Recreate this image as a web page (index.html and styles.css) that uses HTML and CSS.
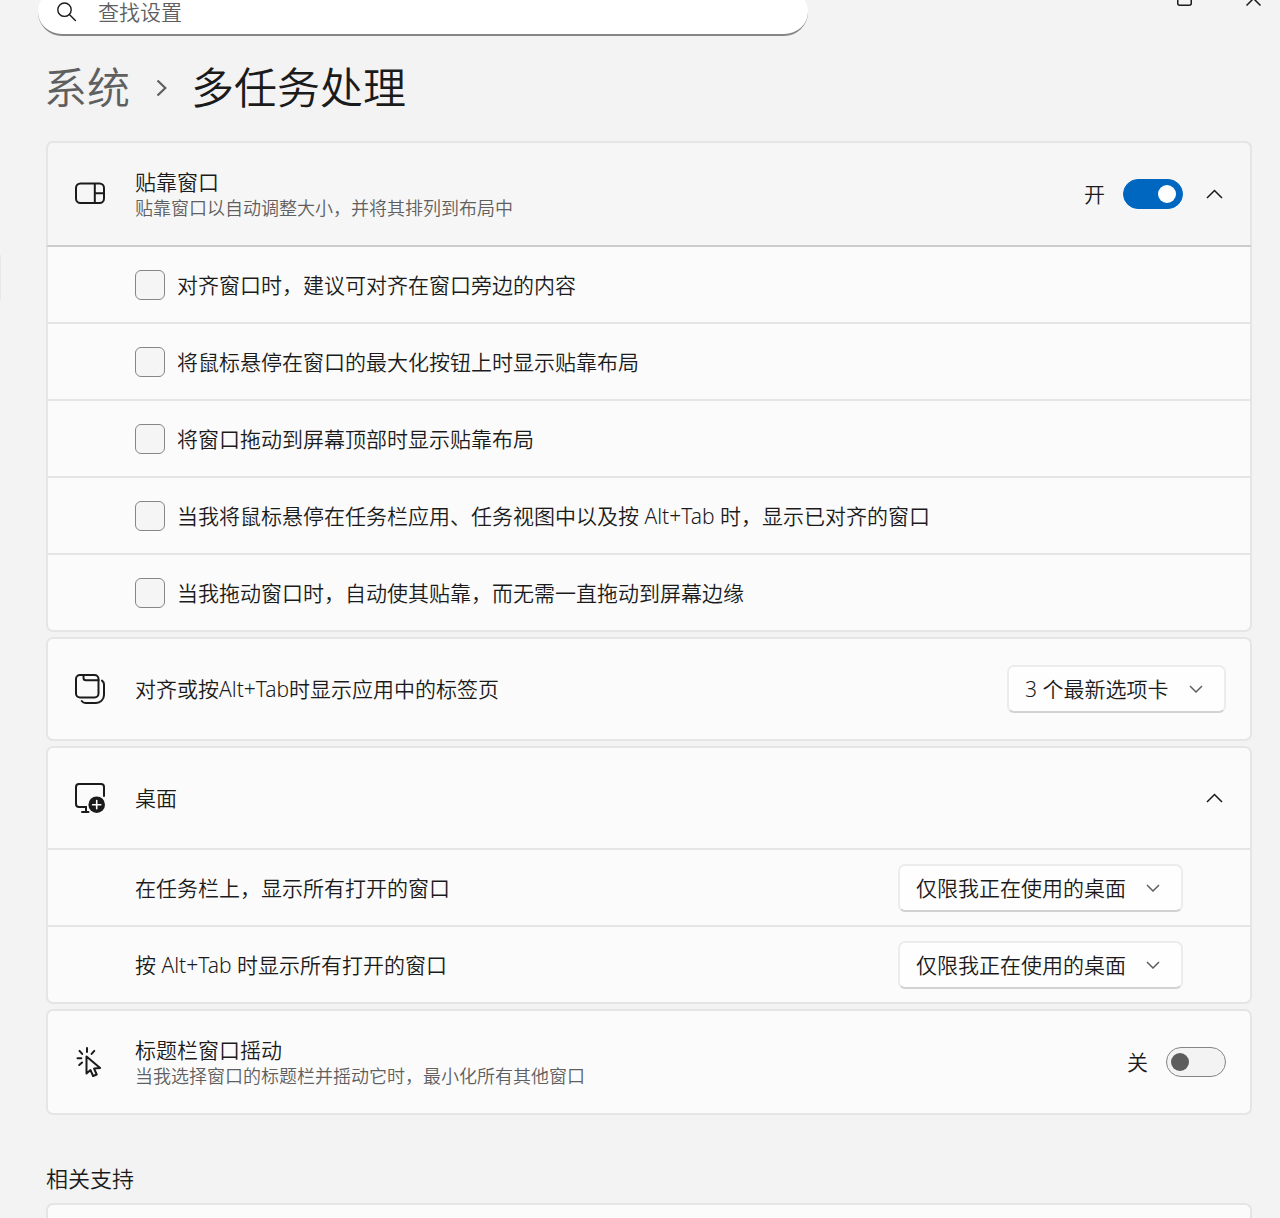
FILE: index.html
```html
<!DOCTYPE html>
<html lang="zh-CN">
<head>
<meta charset="utf-8">
<meta name="viewport" content="width=device-width, initial-scale=1">
<title>多任务处理</title>
<link rel="stylesheet" href="styles.css">
</head>
<body>
<div class="window">
  <span class="nav-edge"></span>
  <header class="topbar">
    <label class="search">
      <svg width="20" height="20" viewBox="0 0 20 20" fill="none" stroke="#1b1b1b" stroke-width="1.4" stroke-linecap="round" aria-hidden="true"><circle cx="7.5" cy="7.7" r="6.7"/><path d="M12.4 12.6 18.4 18.6"/></svg>
      <input type="text" placeholder="查找设置" aria-label="查找设置">
    </label>
    <div class="window-controls">
      <button type="button" aria-label="最大化"><svg width="15" height="15" viewBox="0 0 15 15" fill="none" stroke="#1b1b1b" stroke-width="1.5" aria-hidden="true"><rect x=".75" y=".75" width="13.5" height="13.5" rx="2"/></svg></button>
      <button type="button" aria-label="关闭"><svg width="15" height="15" viewBox="0 0 15 15" fill="none" stroke="#1b1b1b" stroke-width="1.5" aria-hidden="true"><path d="M.5.5l14 14M14.5.5l-14 14"/></svg></button>
    </div>
  </header>

  <main class="content">
    <nav class="breadcrumb">
      <a href="#system">系统</a>
      <svg width="12" height="18" viewBox="0 0 12 18" fill="none" stroke="#5f5f5f" stroke-width="2.2" aria-hidden="true"><path d="M1.5 1.5 9.3 9l-7.8 7.5"/></svg>
      <h1>多任务处理</h1>
    </nav>

    <div class="cards">
      <section class="card">
        <div class="head head-open">
          <svg class="icon" viewBox="0 0 30 30" fill="none" stroke="#1b1b1b" stroke-width="2" aria-hidden="true"><rect x="1" y="4.5" width="28" height="19.5" rx="4.5"/><path d="M19.8 4.5V24M19.8 14.3H29"/></svg>
          <div class="titles">
            <label class="title" for="snap">贴靠窗口</label>
            <p class="desc">贴靠窗口以自动调整大小，并将其排列到布局中</p>
          </div>
          <span class="state">开</span>
          <input class="switch" type="checkbox" role="switch" id="snap" checked>
          <button class="expander" type="button" aria-label="折叠"><svg width="18" height="10" viewBox="0 0 18 10" fill="none" stroke="#1b1b1b" stroke-width="1.5" aria-hidden="true"><path d="M1 9l7.5-7.5L16 9"/></svg></button>
        </div>
        <label class="row"><input class="check" type="checkbox"><span>对齐窗口时，建议可对齐在窗口旁边的内容</span></label>
        <label class="row"><input class="check" type="checkbox"><span>将鼠标悬停在窗口的最大化按钮上时显示贴靠布局</span></label>
        <label class="row"><input class="check" type="checkbox"><span>将窗口拖动到屏幕顶部时显示贴靠布局</span></label>
        <label class="row"><input class="check" type="checkbox"><span>当我将鼠标悬停在任务栏应用、任务视图中以及按 Alt+Tab 时，显示已对齐的窗口</span></label>
        <label class="row"><input class="check" type="checkbox"><span>当我拖动窗口时，自动使其贴靠，而无需一直拖动到屏幕边缘</span></label>
      </section>

      <section class="card">
        <div class="head">
          <svg class="icon" viewBox="0 0 30 30" fill="none" stroke="#1b1b1b" stroke-width="2" stroke-linecap="round" aria-hidden="true"><rect x="1" y="1" width="22.5" height="22.5" rx="4"/><path d="M8.5 1v2.8A2.5 2.5 0 0 0 11 6.3h12.5M27 6.6A5 5 0 0 1 29 10.5V21a8 8 0 0 1-8 8H10.5a5 5 0 0 1-3.8-2"/></svg>
          <div class="titles"><label class="title" for="tabs">对齐或按Alt+Tab时显示应用中的标签页</label></div>
          <span class="select">
            <select id="tabs"><option>3 个最新选项卡</option></select>
            <svg width="14" height="8" viewBox="0 0 14 8" fill="none" stroke="#5f5f5f" stroke-width="1.5" aria-hidden="true"><path d="M1 1l6 6 6-6"/></svg>
          </span>
        </div>
      </section>

      <section class="card">
        <div class="head">
          <svg class="icon" viewBox="0 0 30 30" fill="none" stroke="#1b1b1b" stroke-width="2" stroke-linecap="round" aria-hidden="true"><path d="M29 13V4a3 3 0 0 0-3-3H4a3 3 0 0 0-3 3v17a3 3 0 0 0 3 3h7v4.8M7 29h6.5"/><circle cx="21.7" cy="21.7" r="8.3" fill="#1b1b1b" stroke="none"/><path d="M21.7 17.6v8.2M17.6 21.7h8.2" stroke="#fff" stroke-width="1.6"/></svg>
          <div class="titles"><h2 class="title">桌面</h2></div>
          <button class="expander" type="button" aria-label="折叠"><svg width="18" height="10" viewBox="0 0 18 10" fill="none" stroke="#1b1b1b" stroke-width="1.5" aria-hidden="true"><path d="M1 9l7.5-7.5L16 9"/></svg></button>
        </div>
        <div class="row">
          <label class="grow" for="taskbar">在任务栏上，显示所有打开的窗口</label>
          <span class="select">
            <select id="taskbar"><option>仅限我正在使用的桌面</option></select>
            <svg width="14" height="8" viewBox="0 0 14 8" fill="none" stroke="#5f5f5f" stroke-width="1.5" aria-hidden="true"><path d="M1 1l6 6 6-6"/></svg>
          </span>
        </div>
        <div class="row">
          <label class="grow" for="alttab">按 Alt+Tab 时显示所有打开的窗口</label>
          <span class="select">
            <select id="alttab"><option>仅限我正在使用的桌面</option></select>
            <svg width="14" height="8" viewBox="0 0 14 8" fill="none" stroke="#5f5f5f" stroke-width="1.5" aria-hidden="true"><path d="M1 1l6 6 6-6"/></svg>
          </span>
        </div>
      </section>

      <section class="card">
        <div class="head">
          <svg class="icon" viewBox="0 0 30 30" fill="none" stroke="#1b1b1b" stroke-width="2" stroke-linejoin="round" stroke-linecap="round" aria-hidden="true"><path d="M11.5 9.5v17l4-3.4 2.6 5.9 3.6-1.5-2.6-5.9 6-.6z"/><path d="M12 1v4M4.5 3.9l2.7 3M19.3 3.9l-2.7 3M2.5 11.3h3.8M4.2 18l2.9-2.5"/></svg>
          <div class="titles">
            <label class="title" for="shake">标题栏窗口摇动</label>
            <p class="desc">当我选择窗口的标题栏并摇动它时，最小化所有其他窗口</p>
          </div>
          <span class="state">关</span>
          <input class="switch" type="checkbox" role="switch" id="shake">
        </div>
      </section>
    </div>

    <h2 class="support">相关支持</h2>
    <section class="card card-cut"></section>
  </main>
</div>
</body>
</html>
```
FILE: styles.css
```css
* { box-sizing: border-box; }

body {
  margin: 0;
  background: #f3f3f3;
  color: #1b1b1b;
  font: 350 21px/28px "Noto Sans", "Noto Sans CJK SC DemiLight", "Noto Sans CJK SC", sans-serif;
}

h1, h2, p { margin: 0; font-weight: inherit; }

input, select, button { font: inherit; color: inherit; margin: 0; }

button { padding: 0; border: 0; background: none; display: grid; place-items: center; }

svg { display: block; flex: none; }

.window {
  position: relative;
  display: flex;
  flex-direction: column;
  height: 100vh;
  overflow: hidden;
}

.nav-edge {
  position: absolute;
  left: 0;
  top: 255px;
  width: 1px;
  height: 45px;
  background: #e8e8e8;
}

/* The title bar is scrolled partly out of view */
.topbar {
  display: flex;
  flex: none;
  justify-content: space-between;
  align-items: flex-start;
  height: 48px;
  margin-top: -12px;
  padding: 0 19px 0 38px;
}

.search {
  display: flex;
  align-items: center;
  gap: 21px;
  flex: 0 1 770px;
  height: 48px;
  padding: 2px 19px 0;
  border-bottom: 2px solid #868686;
  border-radius: 24px;
  background: #fff;
}

.search input {
  flex: 1;
  min-width: 0;
  padding: 0;
  border: 0;
  outline: 0;
  background: none;
}

.search input::placeholder { color: #5f5f5f; opacity: 1; }

.window-controls { display: flex; gap: 54px; padding-top: 3px; }

.content {
  display: flex;
  flex-direction: column;
  flex: 1;
  padding: 0 28px 0 46px;
}

.breadcrumb {
  display: flex;
  align-items: center;
  height: 105px;
  margin-left: -2px;
  padding-bottom: 2px;
  font-size: 43px;
  line-height: 60px;
}

.breadcrumb a { color: #5f5f5f; text-decoration: none; }
.breadcrumb svg { margin: 0 23px 0 26px; }
.breadcrumb h1 { font-size: 43px; }

.cards { display: flex; flex-direction: column; gap: 5px; }

.card {
  border: 2px solid #e5e5e5;
  border-radius: 7px;
  background: #fbfbfb;
}

.head {
  display: flex;
  align-items: center;
  padding: 25px 24px 25px 27px;
}

/* Drawn over the card's side borders so that its divider spans the full width */
.head-open {
  margin: -2px -2px 0;
  border: 2px solid #e5e5e5;
  border-bottom-color: #cbcbcb;
  border-radius: 7px 7px 0 0;
  background: #f6f6f6;
}

.icon { width: 30px; height: 30px; margin-right: 30px; }

.titles { flex: 1; min-height: 50px; display: flex; flex-direction: column; justify-content: center; }

.title { font-size: 21px; line-height: 28px; }

.desc { color: #5f5f5f; font-size: 18px; line-height: 24px; }

.state { margin-right: 18px; }

.switch {
  appearance: none;
  display: flex;
  align-items: center;
  width: 60px;
  height: 30px;
  padding: 0 4px;
  border: 1px solid #868686;
  border-radius: 15px;
  background: #f3f3f3;
}

.switch::before {
  content: "";
  width: 18px;
  height: 18px;
  border-radius: 50%;
  background: #5d5d5d;
}

.switch:checked {
  justify-content: flex-end;
  padding: 0 6px;
  border-color: #0067c0;
  background: #0067c0;
}

.switch:checked::before { background: #fff; }

.expander { width: 22px; height: 30px; margin-left: 21px; }

.row {
  display: flex;
  align-items: center;
  gap: 12px;
  min-height: 77px;
  padding: 0 67px 0 87px;
  border-top: 2px solid #e5e5e5;
}

.head-open + .row { min-height: 75px; border-top: 0; }

.check {
  appearance: none;
  flex: none;
  width: 30px;
  height: 30px;
  border: 1px solid #868686;
  border-radius: 6px;
  background: #f5f5f5;
}

.grow { flex: 1; }

/* The arrow shares the grid cell of the list box */
.select { display: grid; align-items: center; justify-items: end; }

.select select, .select svg { grid-area: 1 / 1; }

.select svg { margin-right: 23px; pointer-events: none; }

.select select {
  appearance: none;
  height: 48px;
  padding: 0 55px 0 16px;
  border: 2px solid #ececec;
  border-bottom-color: #d2d2d2;
  border-radius: 7px;
  background: #fefefe;
}

.support { margin: 49px 0 11px; font-size: 22px; line-height: 28px; }

.card-cut { flex: 1; border-bottom: 0; border-radius: 7px 7px 0 0; }
```
